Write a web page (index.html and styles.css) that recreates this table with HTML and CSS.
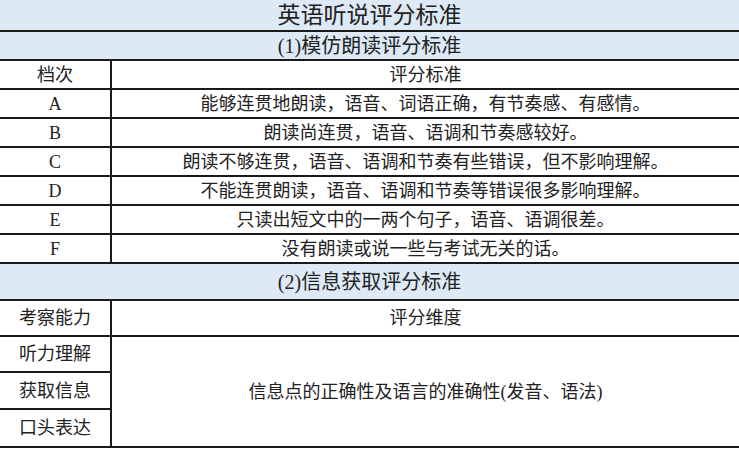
FILE: index.html
```html
<!DOCTYPE html>
<html lang="zh-CN">
<head>
<meta charset="utf-8">
<title>英语听说评分标准</title>
<link rel="stylesheet" href="styles.css">
</head>
<body>
<div class="sheet">
  <div class="cell span title">英语听说评分标准</div>
  <div class="cell span sub">(1)模仿朗读评分标准</div>

  <div class="cell left">档次</div>
  <div class="cell">评分标准</div>
  <div class="cell left">A</div>
  <div class="cell">能够连贯地朗读，语音、词语正确，有节奏感、有感情。</div>
  <div class="cell left">B</div>
  <div class="cell">朗读尚连贯，语音、语调和节奏感较好。</div>
  <div class="cell left">C</div>
  <div class="cell">朗读不够连贯，语音、语调和节奏有些错误，但不影响理解。</div>
  <div class="cell left">D</div>
  <div class="cell">不能连贯朗读，语音、语调和节奏等错误很多影响理解。</div>
  <div class="cell left">E</div>
  <div class="cell">只读出短文中的一两个句子，语音、语调很差。</div>
  <div class="cell left">F</div>
  <div class="cell">没有朗读或说一些与考试无关的话。</div>

  <div class="cell span sub">(2)信息获取评分标准</div>
  <div class="cell left">考察能力</div>
  <div class="cell">评分维度</div>
  <div class="cell left">听力理解</div>
  <div class="cell merged">信息点的正确性及语言的准确性(发音、语法)</div>
  <div class="cell left">获取信息</div>
  <div class="cell left">口头表达</div>
</div>
</body>
</html>
```

FILE: styles.css
```css
html, body {
  margin: 0;
  padding: 0;
  background: #ffffff;
}

body {
  font-family: "Liberation Serif", "Noto Sans CJK SC", serif;
  color: #222222;
}

.sheet {
  width: 739px;
  display: grid;
  grid-template-columns: 112px 1fr;
  grid-template-rows: 32px 29px repeat(7, 29px) 37px 36px 36px 37px 38px;
}

.cell {
  display: flex;
  align-items: center;
  justify-content: center;
  box-sizing: border-box;
  border-bottom: 2px solid #1a1a1a;
  font-size: 18px;
  line-height: 1;
  white-space: nowrap;
}

.span {
  grid-column: 1 / 3;
  background: #dde9f5;
}

.title {
  font-size: 23px;
}

.sub {
  font-size: 20px;
}

.left {
  border-right: 2px solid #1a1a1a;
}

.merged {
  grid-column: 2;
  grid-row: span 3;
}
```
